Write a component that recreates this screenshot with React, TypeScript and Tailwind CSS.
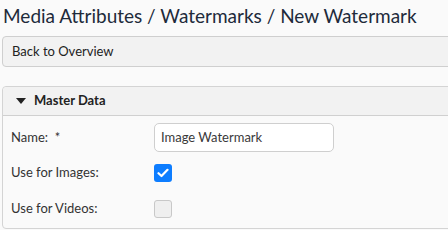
import React from "react";

export default function App() {
  return (
    <div className="w-[448px] h-[230px] overflow-hidden bg-[#fafafa] text-[#333] font-['Lato','Noto_Sans',sans-serif]">
      <h1 className="pl-[3px] pt-[4px] h-[36px] text-[19px] leading-[24px] text-[#212a3a]">
        Media Attributes / Watermarks / New Watermark
      </h1>
      <div className="ml-[2px] w-[460px] h-[31px] border border-[#cfcfcf] rounded-[4px] bg-[#f2f2f2] flex items-center pl-[9px] text-[13px] text-[#222]">
        Back to Overview
      </div>
      <div className="ml-[2px] mt-[19px] w-[460px] border border-[#d4d4d4] rounded-[4px] bg-[#fafafa]">
        <div className="h-[29px] bg-[#f2f2f2] border-b border-[#d0d0d0] flex items-center pl-[13px] gap-[8px] text-[13px] font-bold text-[#222] rounded-t-[4px]">
          <svg width="10" height="6" viewBox="0 0 10 6"><path d="M0 0H10L5 6Z" fill="#222" /></svg>
          <span>Master Data</span>
        </div>
        <div className="pl-[8px] pt-[7px] pb-[10px] text-[13px] text-[#333]">
          <div className="flex items-center h-[29px]">
            <span className="w-[143px]">Name:&nbsp; *</span>
            <div className="w-[180px] h-[29px] bg-white border border-[#cfcfcf] rounded-[5px] flex items-center pl-[6px] text-[#3a3a3a]">
              Image Watermark
            </div>
          </div>
          <div className="flex items-center h-[18px] mt-[12px]">
            <span className="w-[143px]">Use for Images:</span>
            <div className="w-[18px] h-[18px] rounded-[3px] bg-[#0d7dff] flex items-center justify-center">
              <svg width="12" height="10" viewBox="0 0 12 10"><path d="M1.5 5.2L4.5 8L10.5 1.8" stroke="white" strokeWidth="2.2" fill="none" strokeLinecap="round" strokeLinejoin="round" /></svg>
            </div>
          </div>
          <div className="flex items-center h-[18px] mt-[18px]">
            <span className="w-[143px]">Use for Videos:</span>
            <div className="w-[18px] h-[18px] rounded-[3px] bg-[#efefef] border border-[#c8c8c8]" />
          </div>
        </div>
      </div>
    </div>
  );
}
